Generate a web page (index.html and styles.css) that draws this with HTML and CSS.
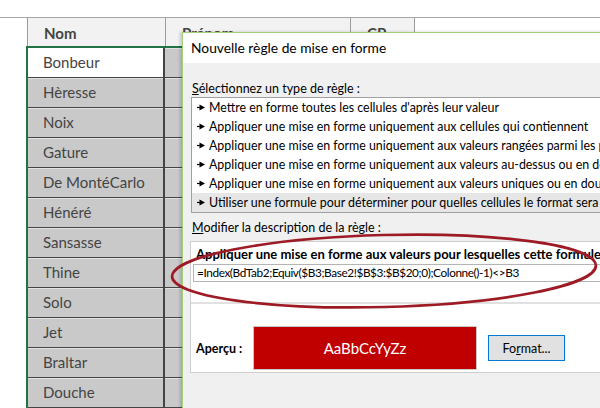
FILE: index.html
```html
<!DOCTYPE html>
<html lang="fr">
<head>
    <meta charset="UTF-8">
    <title>Nouvelle règle de mise en forme</title>
    <link rel="stylesheet" href="styles.css">
</head>
<body>
    <div class="sheet">
        <div class="sheet-top"></div>
        <div class="head-row">
            <div class="hcell c1">Nom</div>
            <div class="hcell c2">Prénom</div>
            <div class="hcell c3">CP</div>
        </div>
        <div class="rows">
            <div class="row"><div class="cell c1 active">Bonbeur</div><div class="cell c2"></div><div class="cell c3"></div></div>
            <div class="row"><div class="cell c1">Hèresse</div><div class="cell c2"></div><div class="cell c3"></div></div>
            <div class="row"><div class="cell c1">Noix</div><div class="cell c2"></div><div class="cell c3"></div></div>
            <div class="row"><div class="cell c1">Gature</div><div class="cell c2"></div><div class="cell c3"></div></div>
            <div class="row"><div class="cell c1">De MontéCarlo</div><div class="cell c2"></div><div class="cell c3"></div></div>
            <div class="row"><div class="cell c1">Hénéré</div><div class="cell c2"></div><div class="cell c3"></div></div>
            <div class="row"><div class="cell c1">Sansasse</div><div class="cell c2"></div><div class="cell c3"></div></div>
            <div class="row"><div class="cell c1">Thine</div><div class="cell c2"></div><div class="cell c3"></div></div>
            <div class="row"><div class="cell c1">Solo</div><div class="cell c2"></div><div class="cell c3"></div></div>
            <div class="row"><div class="cell c1">Jet</div><div class="cell c2"></div><div class="cell c3"></div></div>
            <div class="row"><div class="cell c1">Braltar</div><div class="cell c2"></div><div class="cell c3"></div></div>
            <div class="row"><div class="cell c1">Douche</div><div class="cell c2"></div><div class="cell c3"></div></div>
            <div class="row"><div class="cell c1"></div><div class="cell c2"></div><div class="cell c3"></div></div>
        </div>
    </div>

    <div class="dialog">
        <div class="title">Nouvelle règle de mise en forme</div>
        <div class="dialog-body">
            <div class="label"><u>S</u>électionnez un type de règle :</div>
            <div class="listbox">
                <div class="item"><svg class="arrow" width="8" height="7" viewBox="0 0 8 7"><path d="M0 3.5H3.5" stroke="#000" stroke-width="1.2"/><path d="M2.5 0.5L8 3.5L2.5 6.5Z" fill="#000"/></svg>Mettre en forme toutes les cellules d'après leur valeur</div>
                <div class="item"><svg class="arrow" width="8" height="7" viewBox="0 0 8 7"><path d="M0 3.5H3.5" stroke="#000" stroke-width="1.2"/><path d="M2.5 0.5L8 3.5L2.5 6.5Z" fill="#000"/></svg>Appliquer une mise en forme uniquement aux cellules qui contiennent</div>
                <div class="item"><svg class="arrow" width="8" height="7" viewBox="0 0 8 7"><path d="M0 3.5H3.5" stroke="#000" stroke-width="1.2"/><path d="M2.5 0.5L8 3.5L2.5 6.5Z" fill="#000"/></svg>Appliquer une mise en forme uniquement aux valeurs rangées parmi les premières ou les dernières valeurs</div>
                <div class="item"><svg class="arrow" width="8" height="7" viewBox="0 0 8 7"><path d="M0 3.5H3.5" stroke="#000" stroke-width="1.2"/><path d="M2.5 0.5L8 3.5L2.5 6.5Z" fill="#000"/></svg>Appliquer une mise en forme uniquement aux valeurs au-dessus ou en dessous de la moyenne</div>
                <div class="item"><svg class="arrow" width="8" height="7" viewBox="0 0 8 7"><path d="M0 3.5H3.5" stroke="#000" stroke-width="1.2"/><path d="M2.5 0.5L8 3.5L2.5 6.5Z" fill="#000"/></svg>Appliquer une mise en forme uniquement aux valeurs uniques ou en double</div>
                <div class="item selected"><svg class="arrow" width="8" height="7" viewBox="0 0 8 7"><path d="M0 3.5H3.5" stroke="#000" stroke-width="1.2"/><path d="M2.5 0.5L8 3.5L2.5 6.5Z" fill="#000"/></svg>Utiliser une formule pour déterminer pour quelles cellules le format sera appliqué</div>
            </div>

            <div class="label second"><u>M</u>odifier la description de la règle :</div>
            <div class="panel">
                <div class="formula-part">
                    <div class="bold-label">Appliquer une mise en forme aux valeurs pour lesquelles cette formule est vraie :</div>
                    <div class="formula">=Index(BdTab2;Equiv($B3;Base2!$B$3:$B$20;0);Colonne()-1)&lt;&gt;B3</div>
                </div>
                <div class="preview-part">
                    <div class="apercu">Aperçu :</div>
                    <div class="preview-box">AaBbCcYyZz</div>
                    <button class="btn">Fo<u>r</u>mat...</button>
                </div>
            </div>
        </div>
    </div>

    <svg class="circle" width="600" height="408" viewBox="0 0 600 408">
        <ellipse cx="384" cy="271" rx="212" ry="36" transform="rotate(-1.5 384 271)" fill="none" stroke="#9e1b26" stroke-width="2.7"/>
    </svg>
</body>
</html>
```

FILE: styles.css
```css
:root {
    --cell-gray: #c9c9c9;
    --grid-dark: #444;
    --excel-green: #217346;
    --dialog-bg: #f0f0f0;
}
body {
    margin: 0;
    width: 600px;
    height: 408px;
    overflow: hidden;
    position: relative;
    background: #fff;
    font-family: Lato, "Liberation Sans", sans-serif;
}
.sheet-top {
    height: 17px;
    border-bottom: 1px solid #a6a6a6;
}
.head-row {
    display: flex;
    margin-left: 27px;
    height: 28px;
    border-left: 1px solid #9b9b9b;
}
.hcell {
    background: #f2f2f2;
    border-right: 1px solid #9b9b9b;
    box-sizing: border-box;
    padding-left: 16px;
    font-size: 15px;
    font-weight: 700;
    color: #444;
    line-height: 30px;
}
.c1 { width: 138px; }
.c2 { width: 185px; }
.c3 { width: 64px; }
.rows {
    margin-left: 26px;
    border-left: 2px solid var(--excel-green);
    border-top: 2px solid var(--excel-green);
}
.row {
    display: flex;
    height: 30px;
    box-sizing: border-box;
    border-bottom: 1px solid var(--grid-dark);
}
.cell {
    background: var(--cell-gray);
    box-sizing: border-box;
    border-right: 1px solid #777;
    box-shadow: inset 0 1px 0 #e2e2e2;
    padding-left: 15px;
    font-size: 15px;
    color: #444;
    line-height: 29px;
}
.cell.c1 {
    width: 137px;
    border-right: 2px solid var(--grid-dark);
}
.cell.active {
    background: #fff;
    box-shadow: none;
}

.dialog {
    position: absolute;
    left: 182px;
    top: 32px;
    width: 440px;
    height: 400px;
    border: 1px solid #a3cf7c;
    background: var(--dialog-bg);
    box-shadow: -2px 0 3px rgba(0,0,0,0.18);
    font-size: 12.5px;
    color: #000;
}
.title {
    background: #fff;
    height: 30px;
    line-height: 30px;
    padding-left: 8px;
    font-size: 13.8px;
}
.dialog-body {
    padding-left: 8px;
}
.label {
    margin-top: 18px;
    line-height: 16px;
    padding-left: 1px;
}
.label.second {
    margin-top: 7px;
}
.listbox {
    background: #fff;
    border: 1px solid #a0a0a0;
    border-right: none;
}
.item {
    height: 19px;
    line-height: 19px;
    padding-left: 5px;
    font-size: 12.4px;
    white-space: nowrap;
    overflow: hidden;
}
.item.selected {
    background: #e6e6e6;
}
.arrow {
    margin-right: 4px;
    vertical-align: 1px;
}
.panel {
    margin-top: 5px;
    margin-left: -1px;
    background: #fff;
    border: 1px solid #cfcfcf;
    border-right: none;
    height: 132px;
    box-sizing: border-box;
}
.formula-part {
    height: 62px;
    padding: 4px 0 0 2px;
    box-sizing: border-box;
    border-bottom: 2px solid #e1e1e1;
}
.bold-label {
    font-weight: 700;
    font-size: 13px;
    line-height: 16px;
    padding-left: 3px;
    white-space: nowrap;
}
.formula {
    margin-top: 2px;
    height: 18px;
    line-height: 16px;
    font-size: 11.8px;
    letter-spacing: -0.4px;
    box-sizing: border-box;
    border: 1px solid #b4b4b4;
    border-right: none;
    padding-left: 3px;
    white-space: nowrap;
}
.preview-part {
    display: flex;
    align-items: center;
    padding: 22px 0 0 5px;
}
.apercu {
    width: 57px;
    font-weight: 700;
}
.preview-box {
    width: 224px;
    height: 44px;
    box-sizing: border-box;
    border: 1px solid #c8c8c8;
    background: #c00000;
    color: #fff;
    font-size: 15px;
    display: flex;
    align-items: center;
    justify-content: center;
}
.btn {
    margin-left: 11px;
    width: 77px;
    height: 26px;
    background: #e1e1e1;
    border: 1px solid #0078d7;
    font-family: inherit;
    font-size: 12.5px;
    color: #000;
    padding: 0;
}
.circle {
    position: absolute;
    left: 0;
    top: 0;
    pointer-events: none;
}
```
